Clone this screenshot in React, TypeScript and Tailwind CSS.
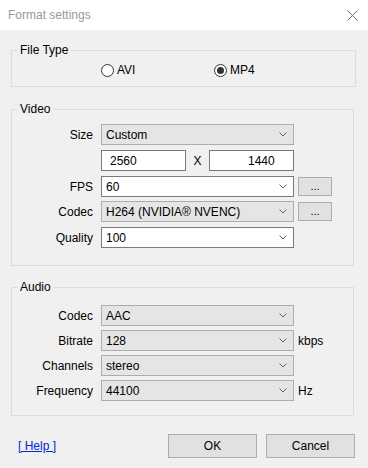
import { FC, ReactNode } from "react";

const Chevron: FC = () => (
  <svg width="8" height="5" viewBox="0 0 8 5" className="shrink-0">
    <path d="M0.5 0.5 L4 4 L7.5 0.5" fill="none" stroke="#606060" strokeWidth="1" />
  </svg>
);

const Combo: FC<{ value: string; white?: boolean }> = ({ value, white }) => (
  <div
    className={
      "flex items-center justify-between w-[193px] h-[21px] border pl-[4px] pr-[6px] " +
      (white ? "bg-white border-[#7a7a7a]" : "bg-[#e5e5e5] border-[#adadad]")
    }
  >
    <span className="leading-[14px]">{value}</span>
    <Chevron />
  </div>
);

const DotsButton: FC = () => (
  <div className="ml-[4px] mt-[1px] self-start w-[34px] h-[19px] border border-[#adadad] bg-[#e1e1e1] flex items-center justify-center text-[11px] leading-[10px] pb-[2px]">
    ...
  </div>
);

const Row: FC<{ label: string; children: ReactNode }> = ({ label, children }) => (
  <div className="flex items-center h-[21px]">
    <div className="w-[81px] text-right leading-[14px]">{label}</div>
    <div className="ml-[8px] flex items-center h-[21px]">{children}</div>
  </div>
);

const Group: FC<{ title: string; className: string; children: ReactNode }> = ({ title, className, children }) => (
  <div className={"relative ml-[11px] border border-[#dcdcdc] " + className}>
    <span className="absolute -top-[8px] left-[5px] px-[3px] bg-[#f0f0f0] leading-[14px]">{title}</span>
    {children}
  </div>
);

const Radio: FC<{ label: string; checked?: boolean }> = ({ label, checked }) => (
  <div className="flex items-center gap-[3px]">
    <div className="w-[13px] h-[13px] rounded-full border border-[#333333] bg-white flex items-center justify-center">
      {checked && <div className="w-[7px] h-[7px] rounded-full bg-[#333333]" />}
    </div>
    <span className="leading-[14px]">{label}</span>
  </div>
);

export default function App() {
  return (
    <div
      className="w-[368px] h-[468px] flex flex-col text-[12px] text-black overflow-hidden"
      style={{ fontFamily: '"Liberation Sans", Arial, sans-serif' }}
    >
      <div className="h-[30px] bg-white flex items-center justify-between pl-[8px] pr-[10px]">
        <span className="text-[#999999] leading-[14px]">Format settings</span>
        <svg width="11" height="11" viewBox="0 0 11 11">
          <path d="M0.5 0.5 L10.5 10.5 M10.5 0.5 L0.5 10.5" stroke="#707070" strokeWidth="1" />
        </svg>
      </div>

      <div className="flex-1 bg-[#f0f0f0] flex flex-col">
        <Group title="File Type" className="mt-[20px] w-[345px] h-[37px]">
          <div className="flex items-center pl-[89px] pt-[12px]">
            <div className="w-[113px]">
              <Radio label="AVI" />
            </div>
            <Radio label="MP4" checked />
          </div>
        </Group>

        <Group title="Video" className="mt-[22px] w-[343px] h-[157px]">
          <div className="flex flex-col pt-[14px]">
            <Row label="Size">
              <Combo value="Custom" />
            </Row>
            <div className="mt-[5px] flex items-center h-[21px] pl-[89px]">
              <div className="w-[85px] h-[21px] bg-white border border-[#7a7a7a] pl-[8px] flex items-center leading-[14px]">
                2560
              </div>
              <div className="w-[23px] text-center leading-[14px]">X</div>
              <div className="w-[85px] h-[21px] bg-white border border-[#7a7a7a] pl-[38px] flex items-center leading-[14px]">
                1440
              </div>
            </div>
            <div className="mt-[5px]">
              <Row label="FPS">
                <Combo value="60" white />
                <DotsButton />
              </Row>
            </div>
            <div className="mt-[4px]">
              <Row label="Codec">
                <Combo value="H264 (NVIDIA® NVENC)" />
                <DotsButton />
              </Row>
            </div>
            <div className="mt-[5px]">
              <Row label="Quality">
                <Combo value="100" white />
              </Row>
            </div>
          </div>
        </Group>

        <Group title="Audio" className="mt-[21px] w-[343px] h-[129px]">
          <div className="flex flex-col gap-[4px] pt-[17px]">
            <Row label="Codec">
              <Combo value="AAC" />
            </Row>
            <Row label="Bitrate">
              <Combo value="128" />
              <span className="ml-[4px] leading-[14px]">kbps</span>
            </Row>
            <Row label="Channels">
              <Combo value="stereo" />
            </Row>
            <Row label="Frequency">
              <Combo value="44100" />
              <span className="ml-[4px] leading-[14px]">Hz</span>
            </Row>
          </div>
        </Group>

        <div className="mt-[18px] flex items-center h-[24px] pl-[18px]">
          <span className="text-[#0026d9] underline leading-[14px]">[ Help ]</span>
          <div className="ml-auto mr-[13px] flex gap-[9px]">
            <div className="w-[89px] h-[24px] border border-[#adadad] bg-[#e1e1e1] flex items-center justify-center leading-[14px]">
              OK
            </div>
            <div className="w-[89px] h-[24px] border border-[#adadad] bg-[#e1e1e1] flex items-center justify-center leading-[14px]">
              Cancel
            </div>
          </div>
        </div>
      </div>
    </div>
  );
}
